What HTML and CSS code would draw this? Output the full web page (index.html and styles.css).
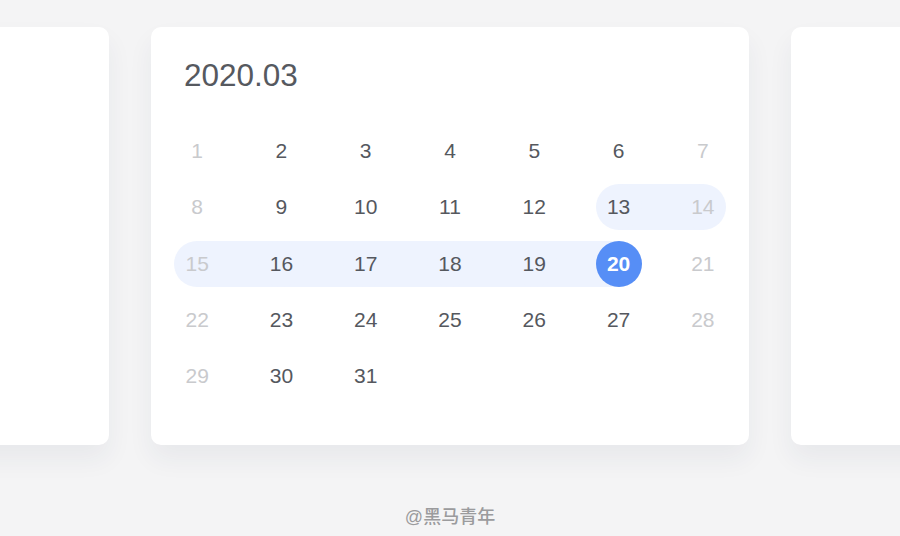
FILE: index.html
```html
<!DOCTYPE html>
<html lang="zh-CN">
<head>
  <meta charset="UTF-8">
  <meta name="viewport" content="width=device-width, initial-scale=1.0">
  <title>日历</title>
  <link rel="stylesheet" href="styles.css">
</head>
<body>
  <div class="track">
    <div class="card side"></div>
    <div class="card calendar">
      <h1 class="month">2020.03</h1>
      <div class="days">
        <div class="day muted"><span>1</span></div>
        <div class="day"><span>2</span></div>
        <div class="day"><span>3</span></div>
        <div class="day"><span>4</span></div>
        <div class="day"><span>5</span></div>
        <div class="day"><span>6</span></div>
        <div class="day muted"><span>7</span></div>

        <div class="day muted"><span>8</span></div>
        <div class="day"><span>9</span></div>
        <div class="day"><span>10</span></div>
        <div class="day"><span>11</span></div>
        <div class="day"><span>12</span></div>
        <div class="day range start"><span>13</span></div>
        <div class="day muted range end"><span>14</span></div>

        <div class="day muted range start"><span>15</span></div>
        <div class="day range"><span>16</span></div>
        <div class="day range"><span>17</span></div>
        <div class="day range"><span>18</span></div>
        <div class="day range"><span>19</span></div>
        <div class="day range end selected"><span>20</span></div>
        <div class="day muted"><span>21</span></div>

        <div class="day muted"><span>22</span></div>
        <div class="day"><span>23</span></div>
        <div class="day"><span>24</span></div>
        <div class="day"><span>25</span></div>
        <div class="day"><span>26</span></div>
        <div class="day"><span>27</span></div>
        <div class="day muted"><span>28</span></div>

        <div class="day muted"><span>29</span></div>
        <div class="day"><span>30</span></div>
        <div class="day"><span>31</span></div>
      </div>
    </div>
    <div class="card side"></div>
  </div>
  <p class="credit">@黑马青年</p>
</body>
</html>
```

FILE: styles.css
```css
*, *::before, *::after {
  padding: 0;
  margin: 0;
  box-sizing: border-box;
}

body {
  height: 100vh;
  overflow: hidden;
  background: #f4f4f5;
  font-family: "Liberation Sans", "Noto Sans CJK SC", sans-serif;
  color: #55585e;
}

/* side cards are cut off by the window edge */
.track {
  display: flex;
  justify-content: center;
  gap: 42px;
  padding: 27px 0 40px;
  overflow: hidden;
}

.card {
  flex: 0 0 598px;
  height: 418px;
  background: #fff;
  border-radius: 10px;
  box-shadow: 0 14px 26px rgba(40, 50, 90, 0.06);
}

.calendar {
  padding: 30px 4px 0;
}

.month {
  padding-left: 29px;
  font-size: 31.5px;
  line-height: 36px;
  font-weight: 400;
  color: #56595f;
}

.days {
  display: grid;
  grid-template-columns: repeat(7, 1fr);
  row-gap: 10.3px;
  margin-top: 35px;
}

.day {
  height: 46px;
  display: flex;
  justify-content: center;
  align-items: center;
  font-size: 21px;
}

.day span {
  width: 46px;
  height: 46px;
  border-radius: 50%;
  display: flex;
  justify-content: center;
  align-items: center;
}

.muted {
  color: #c9cacd;
}

.range {
  background: #eef3fe;
}

.range span {
  background: #eef3fe;
}

.range.start {
  background: linear-gradient(to right, transparent 50%, #eef3fe 50%);
}

.range.end {
  background: linear-gradient(to right, #eef3fe 50%, transparent 50%);
}

.selected span {
  background: #568ef6;
  color: #fff;
  font-weight: 700;
}

.credit {
  margin-top: 17px;
  text-align: center;
  font-size: 18px;
  font-weight: 500;
  color: #9b9b9d;
}
```
